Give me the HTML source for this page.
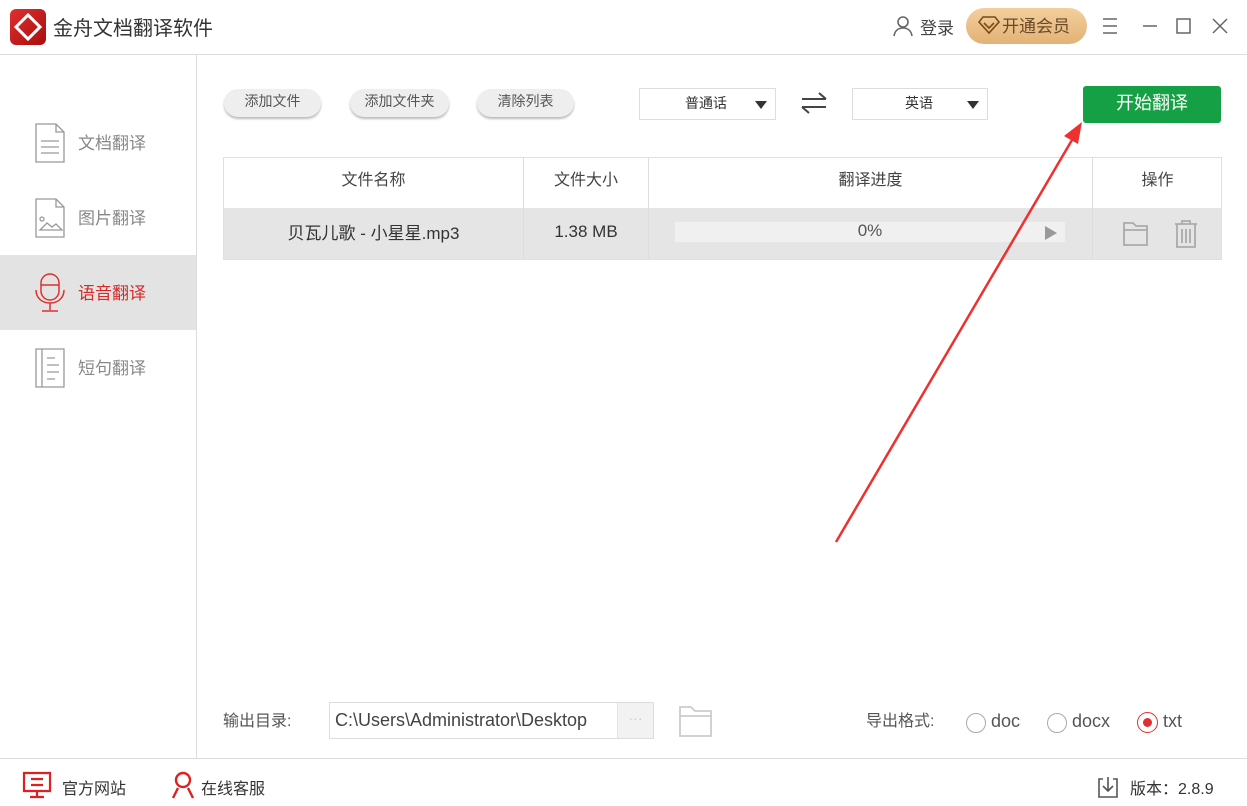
<!DOCTYPE html><html><head><meta charset="utf-8"><style>
*{margin:0;padding:0;box-sizing:border-box}
body{width:1247px;height:806px;background:#fff;font-family:"Liberation Sans","Noto Sans CJK SC",sans-serif;color:#444;position:relative;overflow:hidden;font-size:15px}
.a{position:absolute}
.btn{position:absolute;top:89px;height:28px;border-radius:14px;background:#eee;box-shadow:0 2px 2px #bbb;font-size:14px;color:#555;text-align:center;line-height:25px}
.sel{position:absolute;top:88px;height:32px;border:1px solid #ddd;font-size:14px;line-height:28px;color:#333}
.sel i{position:absolute;right:8px;top:12px;border-left:6px solid transparent;border-right:6px solid transparent;border-top:8px solid #333}
.nav{position:absolute;left:0;width:196px;height:75px;font-size:17px;color:#888}
.nav span{position:absolute;left:78px;top:24px}
.th{position:absolute;top:157px;height:51px;line-height:48px;text-align:center;font-size:16px;color:#444}
</style></head><body>
<div class="a" style="left:10px;top:9px;width:36px;height:36px;border-radius:6px;background:linear-gradient(135deg,#e03030,#a80d0d)"></div>
<div class="a" style="left:18px;top:17px;width:20px;height:20px;border:3px solid #fff;transform:rotate(45deg)"></div>
<div class="a" style="left:53px;top:12px;font-size:20px;color:#333">金舟文档翻译软件</div>
<svg class="a" style="left:892px;top:15px" width="22" height="22" viewBox="0 0 22 22" fill="none" stroke="#666" stroke-width="1.6"><circle cx="11" cy="7" r="5"/><path d="M2 21c1-6 5-8 9-8s8 2 9 8"/></svg>
<div class="a" style="left:920px;top:14px;font-size:17px;color:#444">登录</div>
<div class="a" style="left:966px;top:8px;width:121px;height:36px;border-radius:18px;background:linear-gradient(#f2cf9d,#e3b275)"></div>
<svg class="a" style="left:978px;top:15px" width="22" height="20" viewBox="0 0 22 20" fill="none" stroke="#7a4a1a" stroke-width="1.6"><path d="M5 2h12l4 5-10 11L1 7z"/><path d="M6 8l5 5 5-5"/></svg>
<div class="a" style="left:1002px;top:12px;font-size:17px;color:#6a4a2a">开通会员</div>
<svg class="a" style="left:1100px;top:16px" width="130" height="20" fill="none" stroke="#666" stroke-width="1.5"><path d="M3 3h14M3 10h14M3 17h14M43 10h14M77 3h13v14H77zM113 3l14 14M127 3l-14 14"/></svg>
<div class="a" style="left:0;top:54px;width:1247px;height:1px;background:#ddd"></div>
<div class="a" style="left:196px;top:55px;width:1px;height:703px;background:#ddd"></div>
<div class="nav" style="top:105px"><svg class="a" style="left:35px;top:18px" width="30" height="40" fill="none" stroke="#999" stroke-width="1.3"><path d="M1 1h20l8 8v30H1zM21 1v8h8M6 18h18M6 24h18M6 30h18"/></svg><span>文档翻译</span></div>
<div class="nav" style="top:180px"><svg class="a" style="left:35px;top:18px" width="30" height="40" fill="none" stroke="#999" stroke-width="1.3"><path d="M1 1h20l8 8v30H1zM21 1v8h8M5 32l7-7 5 4 4-3 6 6z"/><circle cx="7" cy="21" r="2"/></svg><span>图片翻译</span></div>
<div class="nav" style="top:255px;background:#e3e3e3;color:#d42a2a"><svg class="a" style="left:34px;top:18px" width="32" height="40" fill="none" stroke="#e03030" stroke-width="1.5"><rect x="7" y="1" width="18" height="26" rx="9"/><path d="M7 12h18M2 17c0 8 6 13 14 13s14-5 14-13M16 30v7M8 38h16"/></svg><span>语音翻译</span></div>
<div class="nav" style="top:330px"><svg class="a" style="left:35px;top:18px" width="30" height="40" fill="none" stroke="#999" stroke-width="1.3"><path d="M1 1h28v38H1zM7 1v38M12 10h8M12 17h12M12 24h12M12 31h8"/></svg><span>短句翻译</span></div>
<div class="btn" style="left:224px;width:97px">添加文件</div>
<div class="btn" style="left:350px;width:99px">添加文件夹</div>
<div class="btn" style="left:477px;width:97px">清除列表</div>
<div class="sel" style="left:639px;width:137px"><span style="position:absolute;left:45px">普通话</span><i></i></div>
<svg class="a" style="left:800px;top:92px" width="28" height="22" fill="none" stroke="#444" stroke-width="2"><path d="M2 7h24M19 1l7 6M26 15H2M9 21l-7-6"/></svg>
<div class="sel" style="left:852px;width:136px"><span style="position:absolute;left:52px">英语</span><i></i></div>
<div class="a" style="left:1083px;top:86px;width:138px;height:37px;background:#16a046;border-radius:3px;color:#fff;font-size:18px;text-align:center;line-height:34px">开始翻译</div>
<div class="a" style="left:223px;top:157px;width:999px;height:103px;border:1px solid #e0e0e0"></div>
<div class="a" style="left:224px;top:208px;width:997px;height:51px;background:#e5e5e5"></div>
<div class="a" style="left:523px;top:157px;width:1px;height:102px;background:#ddd"></div>
<div class="a" style="left:648px;top:157px;width:1px;height:102px;background:#ddd"></div>
<div class="a" style="left:1092px;top:157px;width:1px;height:102px;background:#ddd"></div>
<div class="th" style="left:224px;width:299px">文件名称</div>
<div class="th" style="left:524px;width:124px">文件大小</div>
<div class="th" style="left:649px;width:443px">翻译进度</div>
<div class="th" style="left:1093px;width:129px">操作</div>
<div class="a" style="left:224px;top:219px;width:299px;text-align:center;font-size:17px;color:#333">贝瓦儿歌 - 小星星.mp3</div>
<div class="a" style="left:524px;top:222px;width:124px;text-align:center;font-size:17px;color:#333">1.38 MB</div>
<div class="a" style="left:675px;top:222px;width:390px;height:20px;background:#f0f0f0"></div>
<div class="a" style="left:675px;top:221px;width:390px;text-align:center;font-size:17px;color:#555">0%</div>
<div class="a" style="left:1045px;top:226px;border-top:7px solid transparent;border-bottom:7px solid transparent;border-left:12px solid #999"></div>
<svg class="a" style="left:1122px;top:220px" width="28" height="28" fill="none" stroke="#aaa" stroke-width="1.8"><path d="M2 3h9l3 3h11v19H2zM2 10h23"/></svg>
<svg class="a" style="left:1173px;top:219px" width="26" height="30" fill="none" stroke="#aaa" stroke-width="1.8"><path d="M2 5h22M9 5V2h8v3M4 5v23h18V5M9 10v14M13 10v14M17 10v14"/></svg>
<svg class="a" style="left:0;top:0" width="1247" height="806"><path d="M836 542L1072 140" stroke="#ef3030" stroke-width="2.5"/><path d="M1082 122L1064 136L1078 144z" fill="#ef3030"/></svg>
<div class="a" style="left:223px;top:707px;font-size:16px;color:#555">输出目录:</div>
<div class="a" style="left:329px;top:702px;width:325px;height:37px;border:1px solid #ddd"></div>
<div class="a" style="left:617px;top:703px;width:36px;height:35px;background:#f2f2f2;border-left:1px solid #e2e2e2;color:#ccc;text-align:center;line-height:30px;font-size:14px">···</div>
<div class="a" style="left:335px;top:710px;font-size:18px;color:#444">C:\Users\Administrator\Desktop</div>
<svg class="a" style="left:678px;top:704px" width="36" height="34" fill="none" stroke="#ccc" stroke-width="1.8"><path d="M2 3h11l4 4h16v25H2zM2 12h31"/></svg>
<div class="a" style="left:866px;top:707px;font-size:16px;color:#555">导出格式:</div>
<div class="a" style="left:966px;top:713px;width:20px;height:20px;border:1px solid #aaa;border-radius:50%"></div>
<div class="a" style="left:991px;top:711px;font-size:18px;color:#555">doc</div>
<div class="a" style="left:1047px;top:713px;width:20px;height:20px;border:1px solid #aaa;border-radius:50%"></div>
<div class="a" style="left:1072px;top:711px;font-size:18px;color:#555">docx</div>
<div class="a" style="left:1137px;top:712px;width:21px;height:21px;border:1.5px solid #e03030;border-radius:50%"></div>
<div class="a" style="left:1143px;top:718px;width:9px;height:9px;background:#e03030;border-radius:50%"></div>
<div class="a" style="left:1163px;top:711px;font-size:18px;color:#555">txt</div>
<div class="a" style="left:0;top:758px;width:1247px;height:1px;background:#ddd"></div>
<svg class="a" style="left:22px;top:771px" width="30" height="28" fill="none" stroke="#e02020" stroke-width="2.2"><path d="M2 2h26v18H2zM15 20v5M8 26h14M9 8h12M9 14h12"/></svg>
<div class="a" style="left:62px;top:775px;font-size:16px;color:#333">官方网站</div>
<svg class="a" style="left:170px;top:771px" width="26" height="28" fill="none" stroke="#e02020" stroke-width="2.4"><circle cx="13" cy="9" r="7"/><path d="M3 27l5-10M23 27l-5-10"/></svg>
<div class="a" style="left:201px;top:775px;font-size:16px;color:#333">在线客服</div>
<svg class="a" style="left:1097px;top:775px" width="22" height="24" fill="none" stroke="#555" stroke-width="1.6"><path d="M6 4H2v18h18V4h-4M11 2v14M6 11l5 5 5-5"/></svg>
<div class="a" style="left:1130px;top:775px;font-size:16px;color:#333">版本：2.8.9</div>
</body></html>
